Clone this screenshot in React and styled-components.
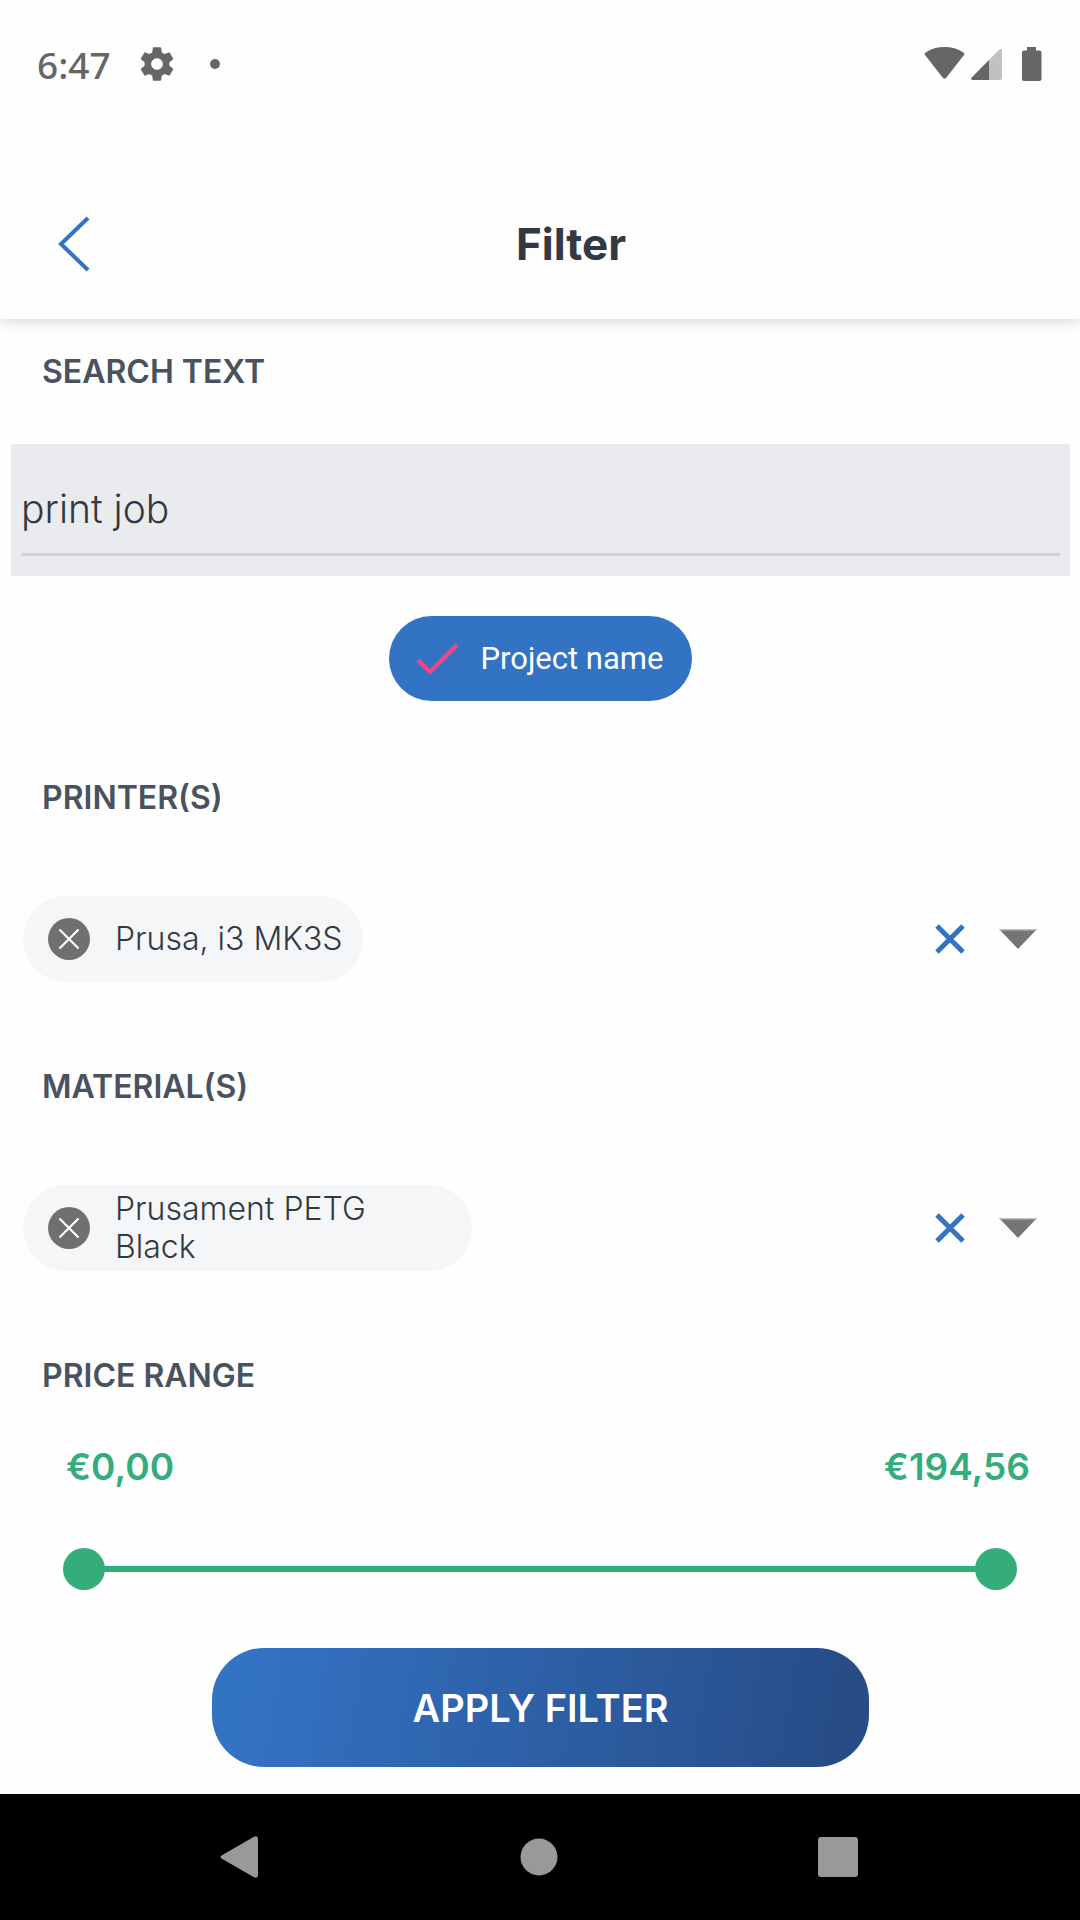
import React, { useState } from 'react'
import styled, { createGlobalStyle } from 'styled-components'

function GearIcon() {
  return (
    <svg width="40" height="40" viewBox="0 0 24 24" fill="currentColor" aria-hidden="true">
      <path d="M19.43 12.98c.04-.32.07-.64.07-.98s-.03-.66-.07-.98l2.11-1.65c.19-.15.24-.42.12-.64l-2-3.46c-.12-.22-.39-.3-.61-.22l-2.49 1c-.52-.4-1.08-.73-1.69-.98l-.38-2.65C14.46 2.18 14.25 2 14 2h-4c-.25 0-.46.18-.49.42l-.38 2.65c-.61.25-1.17.59-1.69.98l-2.49-1c-.23-.09-.49 0-.61.22l-2 3.46c-.13.22-.07.49.12.64l2.11 1.65c-.04.32-.07.65-.07.98s.03.66.07.98l-2.11 1.65c-.19.15-.24.42-.12.64l2 3.46c.12.22.39.3.61.22l2.49-1c.52.4 1.08.73 1.69.98l.38 2.65c.03.24.24.42.49.42h4c.25 0 .46-.18.49-.42l.38-2.65c.61-.25 1.17-.59 1.69-.98l2.49 1c.23.09.49 0 .61-.22l2-3.46c.12-.22.07-.49-.12-.64l-2.11-1.65zM12 15.5c-1.93 0-3.5-1.57-3.5-3.5s1.57-3.5 3.5-3.5 3.5 1.57 3.5 3.5-1.57 3.5-3.5 3.5z" />
    </svg>
  )
}

// wifi, signal and battery
function SystemIcons() {
  return (
    <svg width="118" height="36" viewBox="0 0 118 36" fill="currentColor" aria-hidden="true">
      <path d="M1.2 9.2Q-.2 7.6 1.6 6.4Q10 1 20.500 1T39.400 6.400Q41.200 7.600 39.800 9.200L22 32Q20.500 33.500 19 32Z" />
      <path d="M65 14v20H48.500q-2.200-.4-.8-2.400z" />
      <path opacity=".4" d="M65 14L75.500 3.500Q78 1.700 78 4.500V32q0 2-2 2H65z" />
      <path d="M103 1h9v3.500h3.500q2 0 2 2V33q0 2-2 2h-15.500q-2 0-2-2V6.500q0-2 2-2h3z" />
    </svg>
  )
}

function Cross({ size, stroke }) {
  return (
    <svg width={size} height={size} viewBox="0 0 30 30" fill="none" stroke="currentColor" strokeWidth={stroke} aria-hidden="true">
      <path d="M2 2L28 28M28 2L2 28" />
    </svg>
  )
}

//Row with the selected value, a clear button and the drop down arrow
function PickerRow({ name, value, wide }) {
  const [selected, setSelected] = useState(value)

  return (
    <Picker>
      {selected && (
        <ValueChip $wide={wide}>
          <RemoveButton type="button" aria-label={`Remove ${selected}`} onClick={() => setSelected('')}>
            <Cross size={22} stroke={3} />
          </RemoveButton>
          <span>{selected}</span>
        </ValueChip>
      )}
      <PickerActions>
        <IconButton type="button" aria-label={`Clear ${name}`} onClick={() => setSelected('')}>
          <Cross size={30} stroke={5} />
        </IconButton>
        <IconButton type="button" aria-label={`Choose ${name}`} aria-haspopup="listbox">
          <svg width="40" height="20" viewBox="0 0 40 20" aria-hidden="true">
            <path d="M1 0H39L20 20Z" fill="#757575" />
            <path d="M1 0H39L37.500 1.500H2.500Z" fill="#bdbdbd" />
          </svg>
        </IconButton>
      </PickerActions>
    </Picker>
  )
}

const MAX_PRICE = 19456

const formatPrice = (cents) => `€${(cents / 100).toFixed(2).replace('.', ',')}`

function App() {
  const [text, setText] = useState('print job')
  const [byProject, setByProject] = useState(true)
  const [low, setLow] = useState(0)
  const [high, setHigh] = useState(MAX_PRICE)

  return (
    <Screen>
      <GlobalStyle />
      <StatusBar>
        <Time>6:47</Time>
        <GearIcon />
        <Dot />
        <SystemIcons />
      </StatusBar>

      <Header>
        <BackButton type="button" aria-label="Back">
          <svg width="32" height="56" viewBox="0 0 32 56" fill="none" stroke="#3373c4" strokeWidth="4" aria-hidden="true">
            <path d="M30 2L3 28L30 54" />
          </svg>
        </BackButton>
        <Title>Filter</Title>
      </Header>

      <Content>
        <SectionLabel as="label" htmlFor="search">SEARCH TEXT</SectionLabel>
        <SearchField>
          <SearchInput id="search" type="text" value={text} onChange={(e) => setText(e.target.value)} />
        </SearchField>
        <ToggleChip>
          <HiddenCheckbox type="checkbox" checked={byProject} onChange={(e) => setByProject(e.target.checked)} />
          <svg width="44" height="34" viewBox="0 0 44 34" fill="none" stroke={byProject ? '#ff4081' : 'none'} strokeWidth="4" aria-hidden="true">
            <path d="M3 18L15 30L42 3" />
          </svg>
          Project name
        </ToggleChip>

        <SectionLabel>PRINTER(S)</SectionLabel>
        <PickerRow name="printer" value="Prusa, i3 MK3S" />

        <SectionLabel>MATERIAL(S)</SectionLabel>
        <PickerRow name="material" value="Prusament PETG Black" wide />

        <SectionLabel>PRICE RANGE</SectionLabel>
        <Prices>
          <output htmlFor="low">{formatPrice(low)}</output>
          <output htmlFor="high">{formatPrice(high)}</output>
        </Prices>
        <Slider>
          <Range id="low" type="range" aria-label="Lowest price" min="0" max={MAX_PRICE} value={low}
            onChange={(e) => setLow(Math.min(Number(e.target.value), high))} />
          <Range id="high" type="range" aria-label="Highest price" min="0" max={MAX_PRICE} value={high}
            onChange={(e) => setHigh(Math.max(Number(e.target.value), low))} />
        </Slider>

        <ApplyButton type="button">APPLY FILTER</ApplyButton>
      </Content>

      <NavBar>
        <NavButton type="button" aria-label="Back">
          <svg width="42" height="42" viewBox="0 0 42 42" fill="#999" aria-hidden="true">
            <path d="M2.500 19.500L35 .8Q39-.8 39 3V39Q39 42.800 35 41.200L2.500 22.500Q.5 21 2.500 19.500Z" />
          </svg>
        </NavButton>
        <NavButton type="button" aria-label="Home">
          <svg width="42" height="42" viewBox="0 0 42 42" fill="#999" aria-hidden="true">
            <circle cx="21" cy="21" r="18.500" />
          </svg>
        </NavButton>
        <NavButton type="button" aria-label="Recent apps">
          <svg width="42" height="42" viewBox="0 0 42 42" fill="#999" aria-hidden="true">
            <rect x="1" y="1" width="40" height="40" rx="3" />
          </svg>
        </NavButton>
      </NavBar>
    </Screen>
  )
}

const GlobalStyle = createGlobalStyle`
* {
  box-sizing: border-box;
}
body {
  margin: 0;
  background: #fefefe;
  font-family: Inter, sans-serif;
  color: #323943;
}
button {
  border: 0;
  padding: 0;
  background: none;
  font: inherit;
  color: inherit;
  cursor: pointer;
}
svg {
  display: block;
  flex: none;
}
`

const Screen = styled.div`
display: flex;
flex-direction: column;
min-height: 100vh;
`

const StatusBar = styled.div`
display: flex;
align-items: center;
height: 128px;
padding: 0 38px 0 37px;
color: #666;

svg:last-child {
  margin-left: auto;
}
`

const Time = styled.span`
width: 100px;
font-family: 'Noto Sans', sans-serif;
font-size: 37px;
font-weight: 500;
`

const Dot = styled.span`
width: 10px;
height: 10px;
margin-left: 33px;
border-radius: 50%;
background: currentColor;
`

const Header = styled.header`
display: flex;
align-items: center;
height: 191px;
padding: 40px 34px 0 0;
box-shadow: 0 1px 14px rgba(0, 0, 0, 0.18);
clip-path: inset(0 0 -20px 0);
`

const BackButton = styled.button`
padding: 0 6px 0 58px;
`

const Title = styled.h1`
flex: 1;
margin: 0;
font-size: 44px;
font-weight: 700;
line-height: 48px;
text-align: center;
`

const Content = styled.main`
display: flex;
flex-direction: column;
flex: 1;
padding: 33px 10px 26px 11px;
`

const SectionLabel = styled.h2`
margin: 0 31px;
font-size: 32px;
font-weight: 600;
line-height: 40px;
color: #4a5260;
`

const SearchField = styled.div`
margin-top: 52px;
padding: 20px 10px;
background: #eaebef;
`

const SearchInput = styled.input`
display: block;
width: 100%;
height: 92px;
padding: 0;
border: 0;
border-bottom: 3px solid #d0d4d9;
outline: none;
background: none;
font-family: inherit;
font-size: 39px;
font-weight: 300;
color: inherit;
`

const ToggleChip = styled.label`
display: flex;
align-items: center;
align-self: center;
gap: 22px;
height: 85px;
margin: 40px 0 77px;
padding: 0 29px 0 26px;
border-radius: 43px;
background: #3373c4;
font-family: Roboto, sans-serif;
font-size: 31px;
color: #fff;
cursor: pointer;
`

const HiddenCheckbox = styled.input`
position: absolute;
opacity: 0;
`

const Picker = styled.div`
display: flex;
align-items: center;
min-height: 86px;
margin: 78px 32px 85px 12px;
`

const ValueChip = styled.div`
display: flex;
align-items: center;
gap: 25px;
min-height: 86px;
max-width: ${({ $wide }) => ($wide ? '449px' : 'none')};
padding: 0 ${({ $wide }) => ($wide ? '48px' : '20px')} 0 25px;
border-radius: 43px;
background: #f5f6f8;
font-size: 32px;
font-weight: 300;
line-height: 38px;
`

const RemoveButton = styled.button`
display: grid;
place-items: center;
flex: none;
width: 42px;
height: 42px;
border-radius: 50%;
background: #707070;
color: #fff;
`

const PickerActions = styled.div`
display: flex;
align-items: center;
gap: 33px;
margin-left: auto;
`

const IconButton = styled.button`
color: #3373c4;
`

const Prices = styled.div`
display: flex;
justify-content: space-between;
margin: 47px 40px 57px 55px;
font-size: 37px;
font-weight: 600;
line-height: 48px;
color: #34ad7b;
`

//Both inputs share one grid cell so the two thumbs sit on the same track
const Slider = styled.div`
display: grid;
align-items: center;
height: 42px;
margin: 0 53px 0 52px;
background: linear-gradient(#34ad7b, #34ad7b) center / calc(100% - 20px) 6px no-repeat;
`

const Range = styled.input`
grid-area: 1 / 1;
appearance: none;
width: 100%;
height: 42px;
margin: 0;
background: none;
pointer-events: none;

&::-webkit-slider-thumb {
  appearance: none;
  width: 42px;
  height: 42px;
  border-radius: 50%;
  background: #34ad7b;
  pointer-events: auto;
}
`

const ApplyButton = styled.button`
align-self: center;
width: 62%;
height: 119px;
margin-top: 58px;
border-radius: 52px;
background: linear-gradient(100deg, #3373c4 5%, #274c87 95%);
font-size: 38px;
font-weight: 600;
color: #fff;
`

const NavBar = styled.nav`
display: flex;
justify-content: center;
align-items: center;
gap: 257px;
height: 126px;
padding-right: 2px;
background: #000;
`

const NavButton = styled.button`
display: block;
`

export default App
